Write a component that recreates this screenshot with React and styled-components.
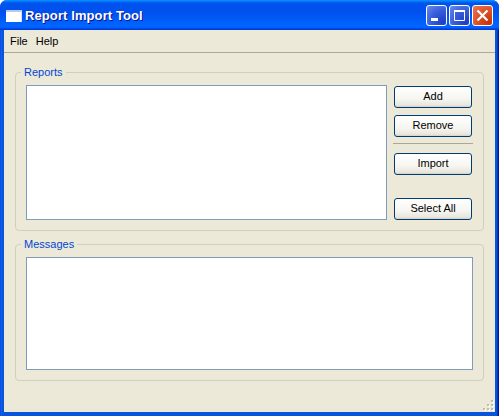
import React from 'react';
import styled, { createGlobalStyle } from 'styled-components';

const Global = createGlobalStyle`
    html, body {
        margin: 0;
        padding: 0;
        background: #fff;
    }
    * {
        box-sizing: border-box;
    }
`;

const Window = styled.div`
    position: relative;
    display: flex;
    flex-direction: column;
    width: 499px;
    height: 416px;
    border-radius: 7px 7px 0 0;
    overflow: hidden;
    background: linear-gradient(90deg, #0831d9 0, #166aee 1px, #0855dd 2px, #0855dd 497px, #001ea0 498px, #00138c 499px);
    font-family: "Liberation Sans", Arial, sans-serif;
    font-size: 11px;
    color: #000;
`;

const TitleBar = styled.div`
    display: flex;
    align-items: center;
    height: 30px;
    padding: 1px 6px 0 6px;
    flex-shrink: 0;
    background: linear-gradient(180deg, #0997ff 0%, #0053ee 10%, #0050ee 40%, #0066ff 86%, #005bff 93%, #003dd7 97%, #003dd7 100%);
`;

const TitleText = styled.span`
    margin-left: 3px;
    font-family: "Liberation Sans", Arial, sans-serif;
    font-size: 13px;
    font-weight: bold;
    letter-spacing: 0.1px;
    color: #fff;
    text-shadow: 1px 1px #0f1089;
    flex: 1;
`;

const CaptionButtons = styled.div`
    display: flex;
    gap: 2px;
`;

const CaptionButton = styled.div`
    width: 21px;
    height: 21px;
    border: 1px solid #fff;
    border-radius: 3px;
    background: ${(p) => (p.$close
        ? 'radial-gradient(circle at 85% 85%, #c83208 0%, #dc4f24 50%, #e87a5e 100%)'
        : 'radial-gradient(circle at 85% 85%, #1c3ec4 0%, #3a5fdc 55%, #6a8eec 100%)')};
    svg {
        display: block;
    }
`;

const Client = styled.div`
    position: relative;
    flex: 1;
    display: flex;
    flex-direction: column;
    margin: 0 4px 4px 4px;
    background: #ece9d8;
`;

const MenuBar = styled.div`
    display: flex;
    height: 23px;
    padding: 0 0 0 6px;
    gap: 8px;
    align-items: center;
    border-bottom: 1px solid #aca899;
`;

const Body = styled.div`
    display: flex;
    flex-direction: column;
    gap: 7px;
    padding: 13px 11px 0 11px;
`;

const Group = styled.fieldset`
    margin: 0;
    min-width: 0;
    height: ${(p) => p.$height}px;
    padding: 6px 10px 0 10px;
    border: 1px solid #d0d0bf;
    border-radius: 4px;
    display: flex;
    gap: 6px;
`;

const GroupLabel = styled.legend`
    margin-left: -5px;
    padding: 0 3px;
    font-size: 11px;
    line-height: 13px;
    color: #0046d5;
`;

const Row = styled.div`
    display: flex;
    gap: 6px;
`;

const ListBox = styled.div`
    width: ${(p) => p.$width}px;
    height: ${(p) => p.$height}px;
    background: #fff;
    border: 1px solid #7f9db9;
`;

const ButtonColumn = styled.div`
    display: flex;
    flex-direction: column;
    width: 80px;
    padding-top: 1px;
`;

const Button = styled.button`
    width: 78px;
    height: 22px;
    margin: 0 1px ${(p) => p.$after || 7}px 1px;
    padding: 0 0 2px 0;
    border: 1px solid #003c74;
    border-radius: 3px;
    background: linear-gradient(180deg, #fff 0%, #f6f5f0 60%, #e9e7de 90%, #d6d0c5 100%);
    font-family: "Liberation Sans", Arial, sans-serif;
    font-size: 11px;
    color: #000;
`;

const Separator = styled.div`
    height: 1px;
    margin-bottom: 9px;
    background: #aca899;
`;

const Grip = styled.svg`
    position: absolute;
    right: 1px;
    bottom: 1px;
`;

function AppIcon() {
    return (
        <svg width="16" height="12" viewBox="0 0 16 12">
            <rect x="0" y="0" width="16" height="12" fill="#fff" />
            <rect x="0" y="0" width="16" height="2" fill="#b9c9e8" />
            <rect x="15" y="1" width="1" height="11" fill="#d8e2f4" />
        </svg>
    );
}

function ResizeGrip() {
    const dots = [[8, 0], [4, 4], [8, 4], [0, 8], [4, 8], [8, 8]];
    return (
        <Grip width="11" height="11" viewBox="0 0 11 11">
            {dots.map(([x, y]) => (
                <g key={`${x}-${y}`}>
                    <rect x={x + 1} y={y + 1} width="2" height="2" fill="#fff" />
                    <rect x={x} y={y} width="2" height="2" fill="#c1bda8" />
                </g>
            ))}
        </Grip>
    );
}

function App() {
    return (
        <Window>
            <Global />
            <TitleBar>
                <AppIcon />
                <TitleText>Report Import Tool</TitleText>
                <CaptionButtons>
                    <CaptionButton>
                        <svg width="19" height="19" viewBox="0 0 19 19">
                            <rect x="4" y="12" width="7" height="3" fill="#fff" />
                        </svg>
                    </CaptionButton>
                    <CaptionButton>
                        <svg width="19" height="19" viewBox="0 0 19 19">
                            <path d="M4.5 5.5h10v9h-10z" fill="none" stroke="#fff" />
                            <rect x="4" y="4" width="11" height="2" fill="#fff" />
                        </svg>
                    </CaptionButton>
                    <CaptionButton $close>
                        <svg width="19" height="19" viewBox="0 0 19 19">
                            <path d="M4.5 4.5l10 10M14.5 4.5l-10 10" stroke="#fff" strokeWidth="2.2" />
                        </svg>
                    </CaptionButton>
                </CaptionButtons>
            </TitleBar>
            <Client>
                <MenuBar>
                    <span>File</span>
                    <span>Help</span>
                </MenuBar>
                <Body>
                    <Group $height={165}>
                        <GroupLabel>Reports</GroupLabel>
                        <Row>
                            <ListBox $width={361} $height={135} />
                            <ButtonColumn>
                                <Button>Add</Button>
                                <Button $after={6}>Remove</Button>
                                <Separator />
                                <Button $after={23}>Import</Button>
                                <Button>Select All</Button>
                            </ButtonColumn>
                        </Row>
                    </Group>
                    <Group $height={143}>
                        <GroupLabel>Messages</GroupLabel>
                        <ListBox $width={447} $height={113} />
                    </Group>
                </Body>
                <ResizeGrip />
            </Client>
        </Window>
    );
}

export default App;
